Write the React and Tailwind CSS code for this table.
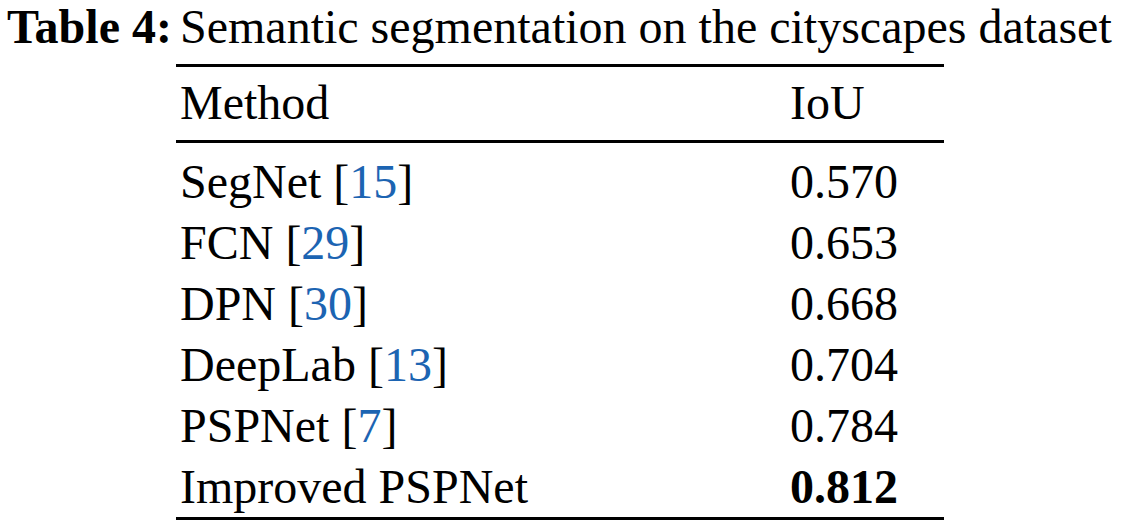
const rows = [
  { name: "SegNet", ref: "15", iou: "0.570" },
  { name: "FCN", ref: "29", iou: "0.653" },
  { name: "DPN", ref: "30", iou: "0.668" },
  { name: "DeepLab", ref: "13", iou: "0.704" },
  { name: "PSPNet", ref: "7", iou: "0.784" },
  { name: "Improved PSPNet", iou: "0.812", best: true },
];

export default function App() {
  return (
    <div className="w-[1121px] h-[525px] bg-white text-black font-['Liberation_Serif','Times_New_Roman',serif] text-[48px] leading-none">
      <div className="flex items-baseline pt-[3px] h-[64px]">
        <span className="font-bold w-[180px] pl-[7px]">Table 4:</span>
        <span>Semantic segmentation on the cityscapes dataset</span>
      </div>
      <div className="ml-[176px] w-[768px] border-t-[3px] border-b-[3px] border-black">
        <div className="flex items-center h-[76px] pb-[2px] border-b-[3px] border-black">
          <div className="w-[614px] pl-[4px]">Method</div>
          <div>IoU</div>
        </div>
        <div className="pt-[8px]">
          {rows.map((r) => (
            <div key={r.name} className="flex items-center h-[61px]">
              <div className="w-[614px] pl-[4px]">
                {r.name}
                {r.ref && (
                  <>
                    {" ["}
                    <span className="text-[#1c64b2]">{r.ref}</span>]
                  </>
                )}
              </div>
              <div className={r.best ? "font-bold" : ""}>{r.iou}</div>
            </div>
          ))}
        </div>
      </div>
    </div>
  );
}
